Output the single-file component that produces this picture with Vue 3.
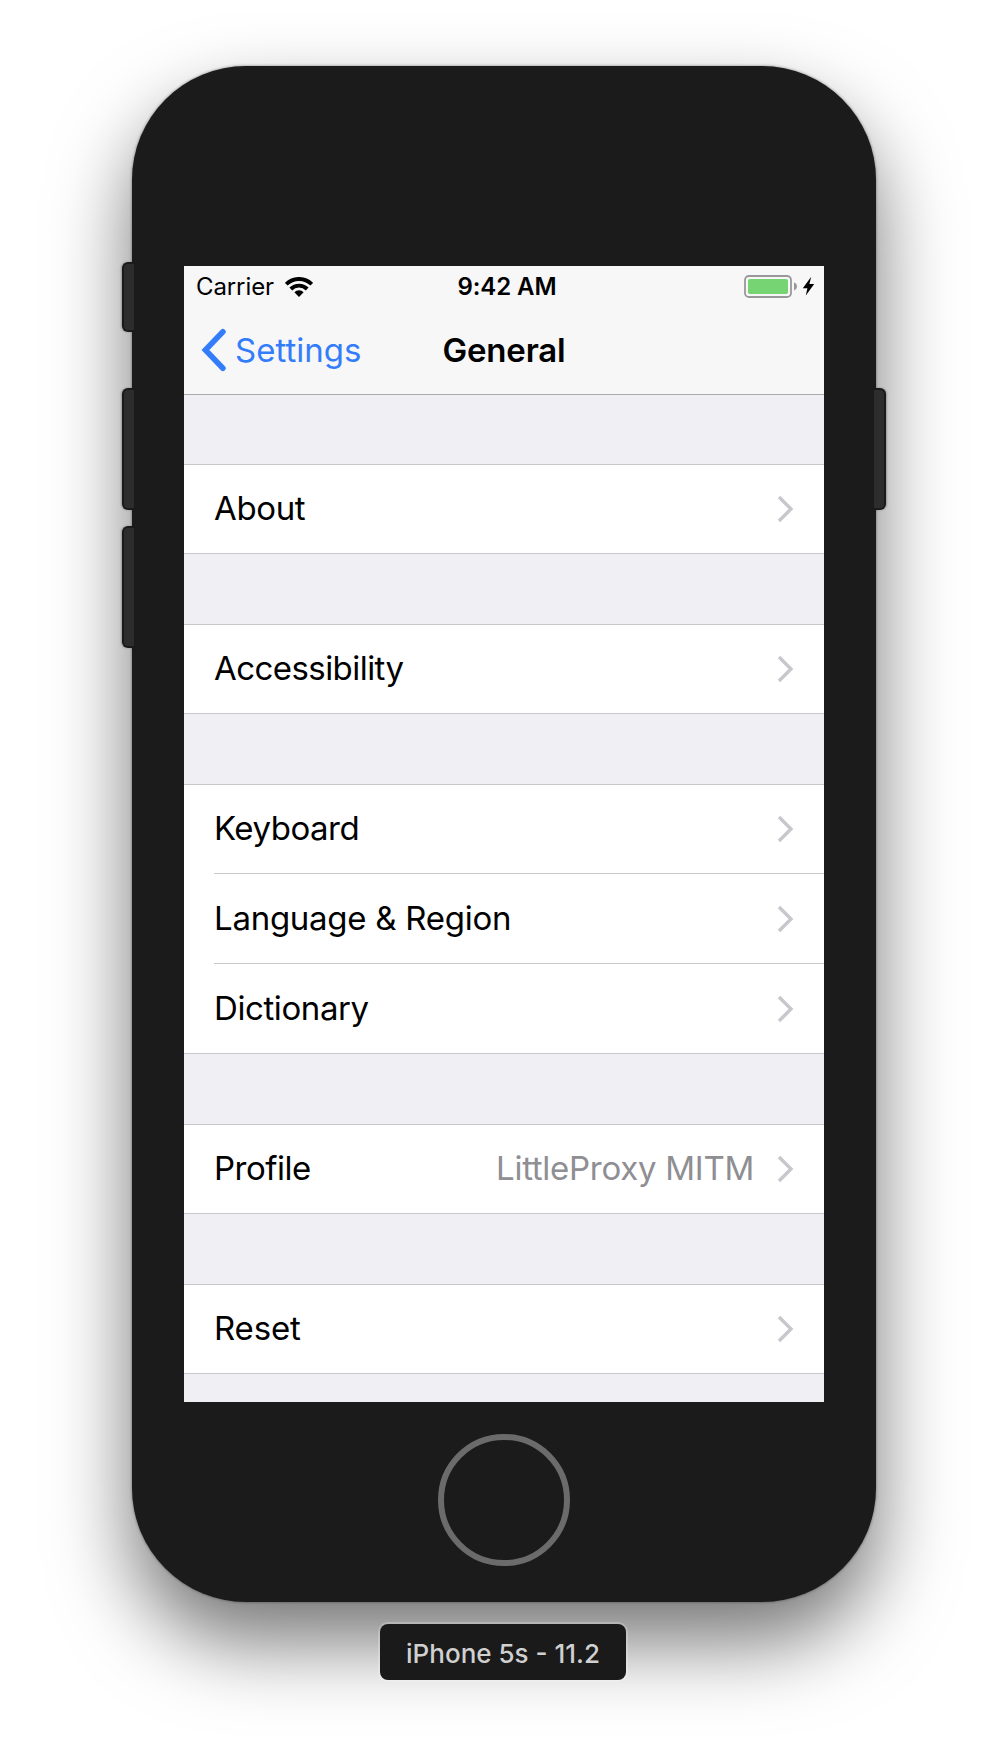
<script setup>
const groups = [
  [{ label: 'About', spacing: -0.35 }],
  [{ label: 'Accessibility', spacing: -0.56 }],
  [
    { label: 'Keyboard', spacing: -0.5 },
    { label: 'Language & Region', spacing: -0.27 },
    { label: 'Dictionary', spacing: -0.4 },
  ],
  [{ label: 'Profile', spacing: -0.5, value: 'LittleProxy MITM' }],
  [{ label: 'Reset', spacing: -0.15 }],
]
const buttons = ['mute', 'volume-up', 'volume-down', 'power']
</script>

<template>
  <main class="stage">
    <div class="phone">
      <span v-for="b in buttons" :key="b" class="button" :class="b"></span>
      <section class="screen">
        <header class="top">
          <div class="status">
            <div class="left">
              <span class="carrier">Carrier</span>
              <svg class="wifi" width="28" height="20" viewBox="0 0 28 20">
                <g fill="none" stroke="#000" stroke-width="3.9">
                  <path d="M1.2 7.2 A18.2 18.2 0 0 1 26.8 7.2" />
                  <path d="M5.8 12 A11.6 11.6 0 0 1 22.2 12" />
                </g>
                <path d="M9.4 15.2 A6.5 6.5 0 0 1 18.6 15.2 L14 20 Z" />
              </svg>
            </div>
            <span class="time">9:42 AM</span>
            <svg class="battery" width="71" height="24" viewBox="0 0 71 24">
              <rect x="1" y="1" width="46" height="21" rx="4" fill="none" stroke="#98989a" stroke-width="1.8" />
              <rect x="4" y="4" width="40" height="15" rx="1.8" fill="#76d572" />
              <path d="M50 7.6 C54 8.6 54 14.4 50 15.4 Z" fill="#98989a" />
              <path d="M67.2 1.8 L58.8 13.2 H63.4 L61.8 20.4 L70.2 9 H65.4 Z" fill="#000" />
            </svg>
          </div>
          <nav class="nav">
            <a class="back">
              <svg width="26" height="44" viewBox="0 0 26 44">
                <path d="M22.9 3.8 L5.4 22 L22.9 40.2" fill="none" stroke="#347dfa" stroke-width="5.6" stroke-linecap="round" />
              </svg>
              <span>Settings</span>
            </a>
            <h1>General</h1>
          </nav>
        </header>
        <ul v-for="(group, i) in groups" :key="i" class="group">
          <li v-for="row in group" :key="row.label" class="row">
            <span class="label" :style="{ letterSpacing: row.spacing + 'px' }">{{ row.label }}</span>
            <span v-if="row.value" class="value">{{ row.value }}</span>
            <svg class="chevron" width="17" height="28" viewBox="0 0 17 28">
              <path d="M2 2 L14 14 L2 26" fill="none" stroke="#c7c7cc" stroke-width="3.4" />
            </svg>
          </li>
        </ul>
      </section>
      <div class="home"></div>
    </div>
    <div class="caption">iPhone 5s - 11.2</div>
  </main>
</template>

<style>
body {
  background: #fff;
}
</style>

<style scoped>
.stage {
  box-sizing: border-box;
  width: 1008px;
  height: 1764px;
  padding-top: 66px;
  display: flex;
  flex-direction: column;
  align-items: center;
  overflow: hidden;
  font-family: Inter, "Liberation Sans", sans-serif;
  color: #000;
}
.phone {
  position: relative;
  box-sizing: border-box;
  flex: none;
  width: 744px;
  height: 1536px;
  padding-top: 200px;
  border-radius: 114px;
  background: #1b1b1b;
  box-shadow: 0 40px 80px rgba(0, 0, 0, 0.54), 0 0 3px rgba(0, 0, 0, 0.45);
  display: flex;
  flex-direction: column;
  align-items: center;
}
.button {
  position: absolute;
  box-sizing: border-box;
  left: -10px;
  width: 12px;
  height: 122px;
  background: #2d2d2d;
  border: 2px solid #1a1a1a;
  border-right: 0;
  border-radius: 6px 0 0 6px;
  box-shadow: -1px 0 2px rgba(0, 0, 0, 0.25);
}
.mute { top: 196px; height: 70px; }
.volume-up { top: 322px; }
.volume-down { top: 460px; }
.power {
  top: 322px;
  left: auto;
  right: -10px;
  border: 2px solid #1a1a1a;
  border-left: 0;
  border-radius: 0 6px 6px 0;
  box-shadow: 1px 0 2px rgba(0, 0, 0, 0.25);
}
.screen {
  flex: none;
  width: 640px;
  height: 1136px;
  background: #efeff4;
  overflow: hidden;
}
.top {
  box-sizing: border-box;
  height: 129px;
  background: #f7f7f8;
  border-bottom: 1px solid #a9a9ab;
}
.status {
  height: 40px;
  padding: 0 9px 0 12px;
  display: grid;
  grid-template-columns: 1fr auto 1fr;
  align-items: center;
}
.left {
  display: flex;
  align-items: center;
  gap: 11px;
}
.carrier {
  font-size: 24px;
  letter-spacing: -0.1px;
}
.wifi {
  margin-top: 1px;
}
.time {
  margin-left: 3px;
  font-size: 24px;
  font-weight: 600;
  letter-spacing: -0.1px;
}
.battery {
  justify-self: end;
  margin-top: 1px;
}
.nav {
  height: 88px;
  padding: 0 16px;
  display: grid;
  grid-template-columns: 1fr auto 1fr;
  align-items: center;
}
.back {
  display: flex;
  align-items: center;
  gap: 9px;
  color: #347dfa;
  font-size: 33px;
  letter-spacing: 0;
}
h1 {
  margin: 0;
  font-size: 33px;
  font-weight: 600;
  letter-spacing: -0.2px;
}
.group {
  margin: 69px 0 0;
  padding: 0;
  list-style: none;
  background: #fff;
  border-top: 1px solid #c8c7cc;
  border-bottom: 1px solid #c8c7cc;
}
.group + .group {
  margin-top: 70px;
}
.row {
  box-sizing: border-box;
  height: 88px;
  margin-left: 30px;
  padding-right: 30px;
  display: flex;
  align-items: center;
  font-size: 33px;
}
.row + .row {
  height: 90px;
  border-top: 1px solid #c8c7cc;
}
.label {
  flex: 1;
  padding-bottom: 2px;
}
.value {
  padding-bottom: 2px;
  margin-right: 23px;
  color: #8e8e93;
  letter-spacing: -0.27px;
}
.home {
  box-sizing: border-box;
  width: 132px;
  height: 132px;
  margin-top: 32px;
  border: 6px solid #6b6b6b;
  border-radius: 50%;
}
.caption {
  position: relative;
  flex: none;
  box-sizing: border-box;
  width: 246px;
  height: 56px;
  margin: 22px 2px 0 0;
  border-radius: 8px;
  background: #1a1a1a;
  box-shadow: 0 0 0 2px rgba(255, 255, 255, 0.22);
  color: #d0d0d0;
  font-size: 26px;
  font-weight: 500;
  line-height: 59px;
  text-align: center;
}
</style>
